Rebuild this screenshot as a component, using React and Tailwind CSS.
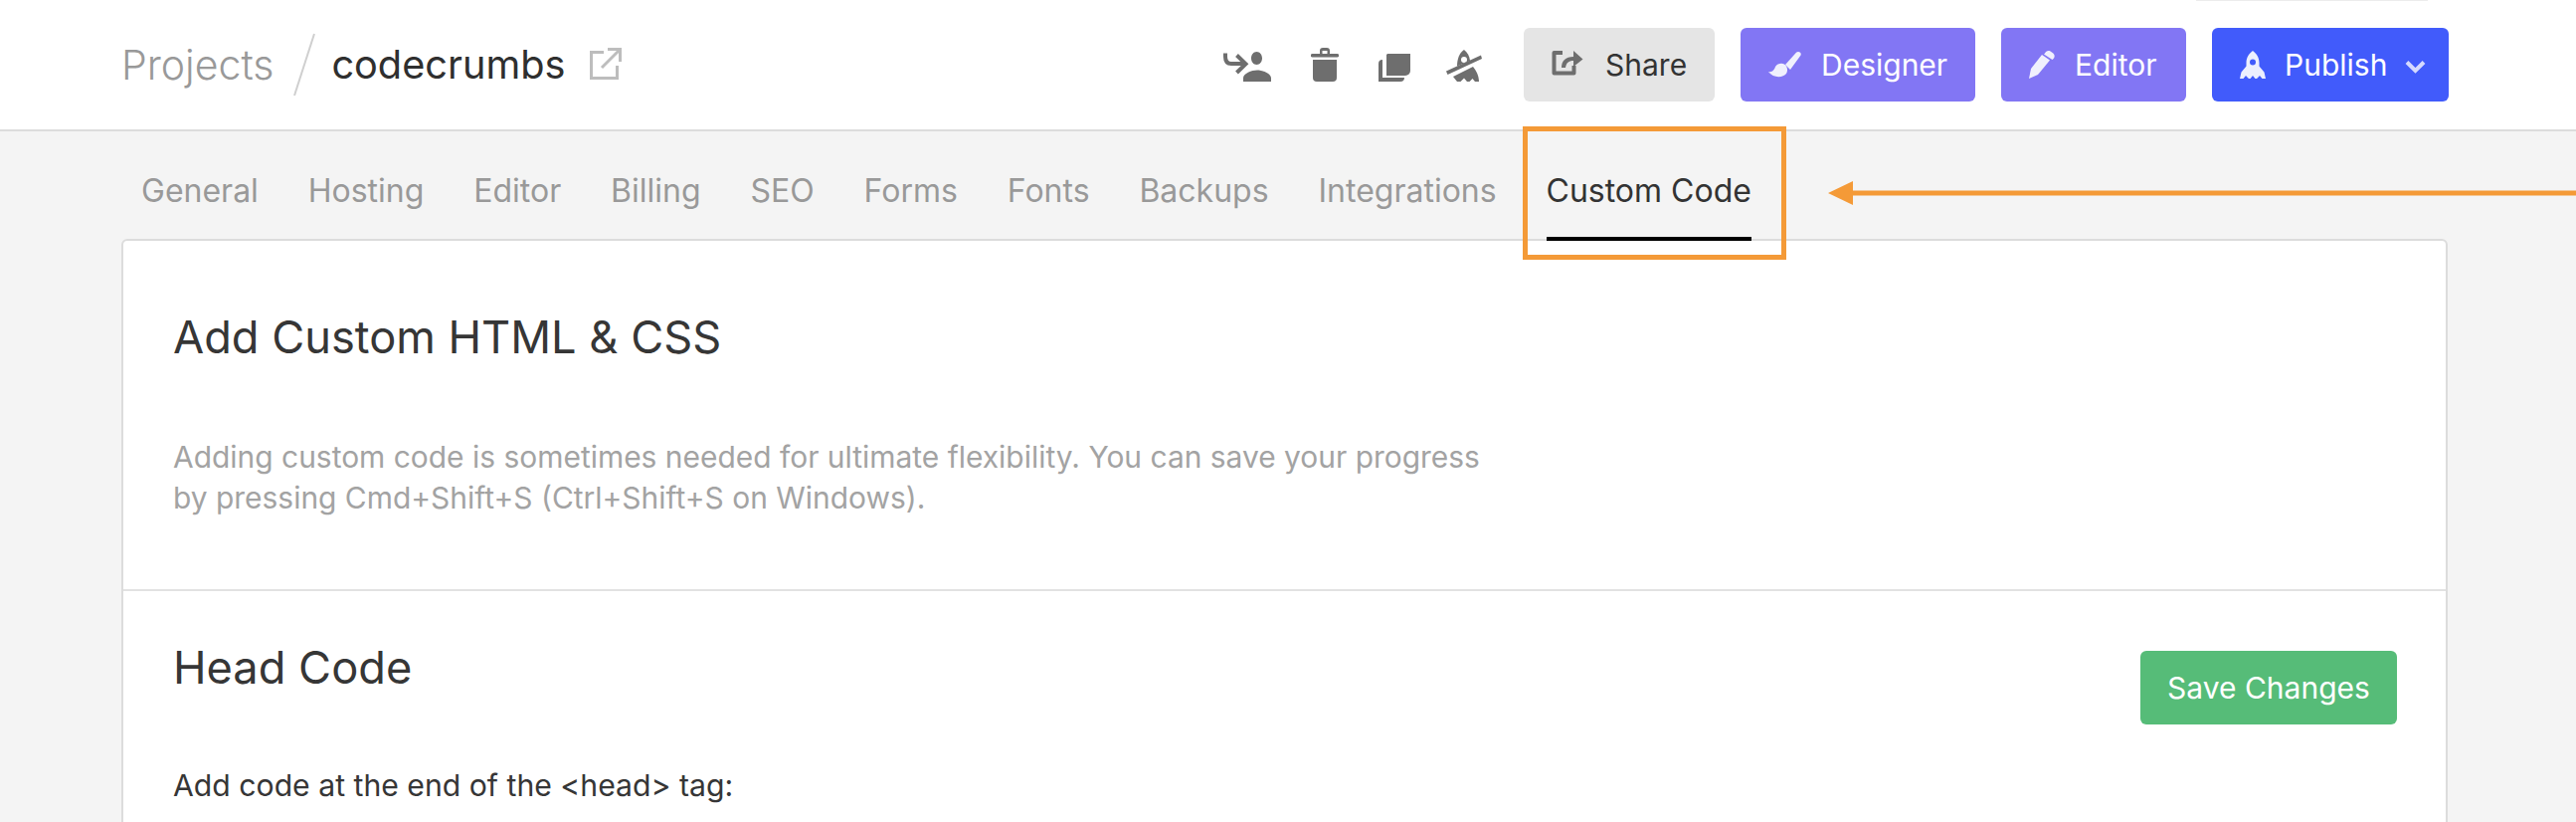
const Move = () => (
  <svg width="48" height="30" viewBox="0 0 48 30" fill="#6e6e6e" className="block">
    <path d="M28 6.500C28 2.900 30.400 0 33.500 0S39 2.900 39 6.500 36.600 13 33.500 13 28 10.100 28 6.500ZM20 30v-3.500c0-4.600 8.500-8 13.900-8S48 21.900 48 26.500V30Z" />
    <path d="M2 1.500v3.500c0 5 2.500 7 6 7h14.500M13.500 3.500l9 8.700-9 8.800" fill="none" stroke="#6e6e6e" strokeWidth="4" />
  </svg>
);
const Trash = () => (
  <svg width="28" height="34" viewBox="0 0 28 34" fill="#6e6e6e" className="block">
    <path d="M9 6V3a3 3 0 0 1 3-3h4a3 3 0 0 1 3 3v3h7.500a1.500 1.500 0 0 1 0 3.500h-25a1.500 1.500 0 0 1 0-3.500ZM11.500 6h5V3h-5Z" fillRule="evenodd" />
    <path d="M2 12h24v18a4 4 0 0 1-4 4H6a4 4 0 0 1-4-4Z" />
  </svg>
);
const Copy = () => (
  <svg width="32" height="28" viewBox="0 0 32 28" fill="#6e6e6e" className="block">
    <path d="M9 0h23v17a5 5 0 0 1-5 5H8V1Z" />
    <path d="M0 10a4 4 0 0 1 4-4v18h22a4 4 0 0 1-4 4H0Z" />
  </svg>
);
const RocketOff = () => (
  <svg width="36" height="32" viewBox="0 0 36 32" fill="#6e6e6e" className="block">
    <path d="M18 0c3.500 2.500 5.500 6.500 6 11l-13 5.500C11 9 13.500 3 18 0Z" />
    <circle cx="18" cy="10" r="3" fill="#fff" />
    <path d="M0 21.500 35 5.500l1 3.500L1.500 25Z" />
    <path d="M27 17c3 3.500 6 9 6 15h-4l-2.500-3-3 3h-2.500l-3-3.500-3.500 3.500h-3.500L7 27l4-2Z" />
  </svg>
);
const ShareIcon = () => (
  <svg width="32" height="28" viewBox="0 0 32 28" fill="none" className="block -mt-[6px]">
    <path d="M11 5H2.500v20.500h20V18" stroke="#6e6e6e" strokeWidth="4" strokeLinejoin="round" />
    <path d="M10 20c0-7 4-11 12-11V3l9.500 8.500L22 19v-6c-5 0-7 2-8 7Z" fill="#6e6e6e" />
  </svg>
);
const Brush = () => (
  <svg width="33" height="26" viewBox="0 0 33 26" fill="#f0f0fd" className="block">
    <path d="M17 13 28 .8c1-1 3-1 4 0s1 2.500 0 3.500L22 18Z" />
    <path d="M0 20c4 1 6-2 7-5 2-3 6-4 9-2.500 3 2 4 6 2 9.500-3 4-13 5-18-2Z" />
  </svg>
);
const Pencil = () => (
  <svg width="26" height="28" viewBox="0 0 26 28" fill="#f0f0fd" className="block">
    <path d="M0 28 2 18 13 4l8 5.500L9 24Z" />
    <path d="M16 2.500C17 .5 19-.5 21.500.5l2.500 1.800c2 1.700 2 3.700 1 5.200l-1.500 1.500-8.500-5.500Z" />
  </svg>
);
const Rocket = () => (
  <svg width="26" height="28" viewBox="0 0 26 28" fill="#eceffe" className="block">
    <path fillRule="evenodd" d="M13 0c4 3 6.500 7 6.500 12v3.500l5 6L26 28h-3.500L20 25l-3 3h-1.500L13 25l-2.500 3H9l-3-3-2.500 3H0l1.500-6.500 5-6V12C6.500 7 9 3 13 0Zm0 8.500a3 3 0 1 0 0 6 3 3 0 0 0 0-6Z" />
  </svg>
);
const External = () => (
  <svg width="32" height="32" viewBox="0 0 32 32" fill="none" stroke="#bdbdbd" strokeWidth="3" className="block">
    <path d="M14 4.500H1.500v26h26V18" />
    <path d="M12 20 30 2M18 1.500h12.500V14" />
  </svg>
);

const tabs = ["General", "Hosting", "Editor", "Billing", "SEO", "Forms", "Fonts", "Backups", "Integrations"];

export default function App() {
  return (
    <div className="relative h-[826px] overflow-hidden bg-[#f4f4f4] font-['Inter',sans-serif] text-[30px] text-[#333]">
      <div className="absolute top-0 left-[2208px] w-[233px] h-[1px] bg-[#ececec]" />
      <header className="h-[132px] bg-white border-b-2 border-[#dcdcdc] pl-[122px] pr-[128px] flex items-center justify-between">
        <div className="flex items-center">
          <span className="text-[41px] font-light text-[#999] pt-[2px]">Projects</span>
          <svg width="22" height="64" viewBox="0 0 22 64" className="block ml-[20px] mr-[16px]"><path d="M21 1 1 63" stroke="#cfcfcf" strokeWidth="2" /></svg>
          <span className="text-[39.7px] text-[#2f2f2f] pt-[2px]">codecrumbs</span>
          <span className="ml-[25px] -mt-[2px]"><External /></span>
        </div>
        <div className="flex items-center">
          <div className="flex items-end h-[34px] mr-[42px]">
            <Move />
            <span className="ml-[40px]"><Trash /></span>
            <span className="ml-[40px]"><Copy /></span>
            <span className="ml-[36px]"><RocketOff /></span>
          </div>
          <button className="h-[74px] w-[192px] rounded-[6px] bg-[#e5e5e5] flex items-center pl-[28px] text-[#333]">
            <ShareIcon /><span className="ml-[22px]">Share</span>
          </button>
          <button className="ml-[26px] h-[74px] w-[236px] rounded-[6px] bg-[#8276f4] flex items-center pl-[28px] text-white">
            <Brush /><span className="ml-[20px]">Designer</span>
          </button>
          <button className="ml-[26px] h-[74px] w-[186px] rounded-[6px] bg-[#8276f4] flex items-center pl-[28px] text-white">
            <Pencil /><span className="ml-[20px]">Editor</span>
          </button>
          <button className="ml-[26px] h-[74px] w-[238px] rounded-[6px] bg-[#415bfb] flex items-center pl-[28px] text-white">
            <Rocket /><span className="ml-[19px]">Publish</span>
            <svg width="21" height="14" viewBox="0 0 21 14" fill="none" className="block ml-[18px] mt-[4px]"><path d="M2 2.500 10.500 11 19 2.500" stroke="#d5dafe" strokeWidth="4" /></svg>
          </button>
        </div>
      </header>

      <nav className="relative z-10 mx-[122px] pl-[20px] h-[110px] flex gap-[49.9px] items-end -mb-[2px] text-[32px] text-[#999]">
        {tabs.map((t) => (
          <a key={t} className="h-[74px]">{t}</a>
        ))}
        <a className="h-[74px] text-[#333] border-b-4 border-black">Custom Code</a>
      </nav>

      <main className="mx-[122px] w-[2339px] bg-white border-2 border-[#dcdcdc] rounded-[6px]">
        <section className="px-[50px] pt-[71px] pb-[71px] border-b-2 border-[#e2e2e2]">
          <h1 className="text-[45.2px] leading-[52px] text-[#363636]">Add Custom HTML &amp; CSS</h1>
          <p className="mt-[74px] w-[1340px] leading-[41px] text-[29.95px] text-[#a3a3a3]">
            Adding custom code is sometimes needed for ultimate flexibility. You can save your progress<br />
            by pressing Cmd+Shift+S (Ctrl+Shift+S on Windows).
          </p>
        </section>
        <section className="pl-[50px] pr-[49px] pb-[200px] flex justify-between items-start">
          <div className="pt-[51px]">
            <h2 className="text-[45.2px] leading-[52px] text-[#363636]">Head Code</h2>
            <p className="mt-[72px] leading-[41px] text-[30.2px] text-[#363636]">Add code at the end of the &lt;head&gt; tag:</p>
          </div>
          <button className="mt-[60px] h-[74px] w-[258px] rounded-[6px] bg-[#56bc78] text-white">Save Changes</button>
        </section>
      </main>

      <div className="absolute left-[1531px] top-[127px] w-[265px] h-[134px] border-[5px] border-[#f49a37]" />
      <svg className="absolute left-[1838px] top-[180px]" width="752" height="28" viewBox="0 0 752 28">
        <path d="M0 14 25 2v9.500h727v5H25V26Z" fill="#f49a37" />
      </svg>
    </div>
  );
}
